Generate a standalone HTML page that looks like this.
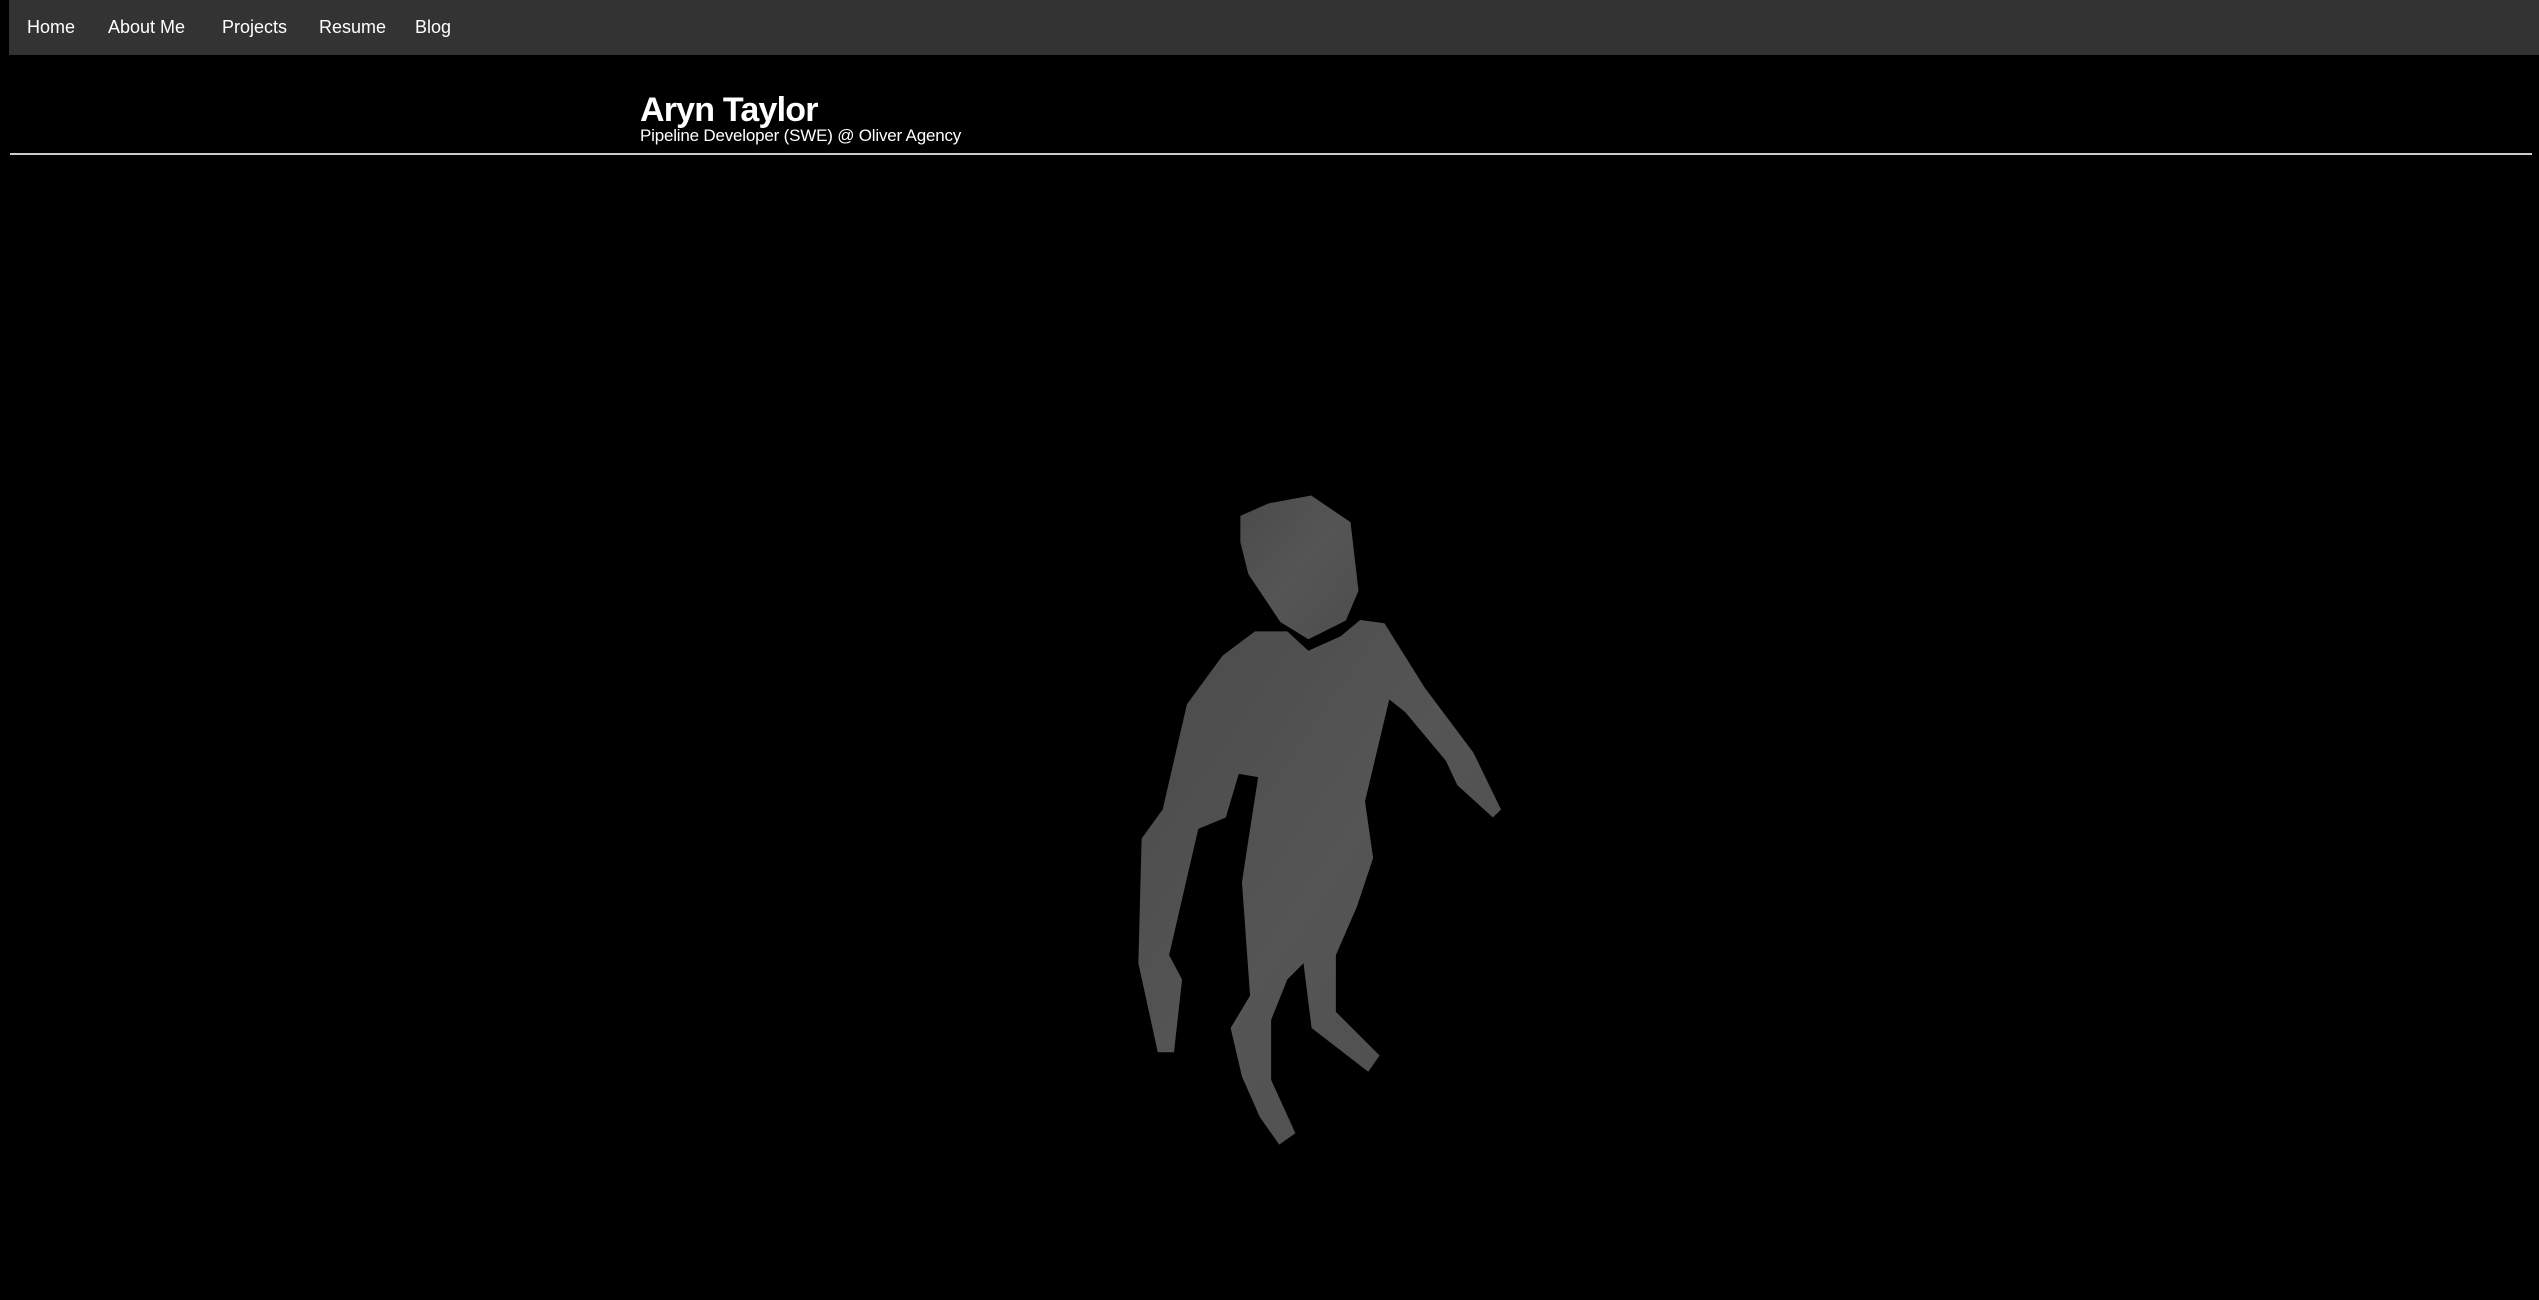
<!DOCTYPE html>
<html><head><meta charset="utf-8"><style>
html,body{margin:0;padding:0;background:#000;width:2539px;height:1300px;overflow:hidden;font-family:"Liberation Sans",sans-serif;color:#fff}
.nav{position:absolute;left:9px;top:0;width:2530px;height:55px;background:#333}
.nav span{position:absolute;top:17px;font-size:18px;color:#fff}
h1{position:absolute;left:640px;top:90px;margin:0;font-size:34px;font-weight:bold;letter-spacing:-0.8px;line-height:40px}
.sub{position:absolute;left:640px;top:125px;font-size:17px;line-height:22px;letter-spacing:-0.2px}
.line{position:absolute;left:10px;top:153px;width:2522px;height:2px;background:#ccc}
svg{position:absolute;left:0;top:0}
</style></head><body>
<div class="nav">
<span style="left:18px">Home</span>
<span style="left:99px">About Me</span>
<span style="left:213px">Projects</span>
<span style="left:310px">Resume</span>
<span style="left:406px">Blog</span>
</div>
<h1>Aryn Taylor</h1>
<div class="sub">Pipeline Developer (SWE) @ Oliver Agency</div>
<div class="line"></div>
<svg width="2539" height="1300" viewBox="0 0 1568 803">
<defs><linearGradient id="g" x1="0" y1="0" x2="1" y2="1"><stop offset="0" stop-color="#4a4a4a"/><stop offset="0.5" stop-color="#555"/><stop offset="1" stop-color="#4d4d4d"/></linearGradient></defs>
<polygon fill="url(#g)" points="775,390 755,405 733,435 718,500 705,518 703,595 715,650 725,650 730,605 722,590 740,512 757,505 765,478 777,480 770,525 767,545 772,615 760,635 767,665 778,690 790,707 800,700 785,667 785,630 795,605 805,595 810,635 845,662 852,652 825,625 825,590 838,560 848,530 843,495 858,432 868,440 893,470 900,485 922,505 927,500 910,465 880,425 855,385 840,383 828,393 808,402 795,390"/>
<polygon fill="url(#g)" stroke="#000" stroke-width="2" points="765,318 783,310 810,305 835,322 840,365 832,384 808,396 790,385 770,355 765,335"/>
</svg>
</body></html>
